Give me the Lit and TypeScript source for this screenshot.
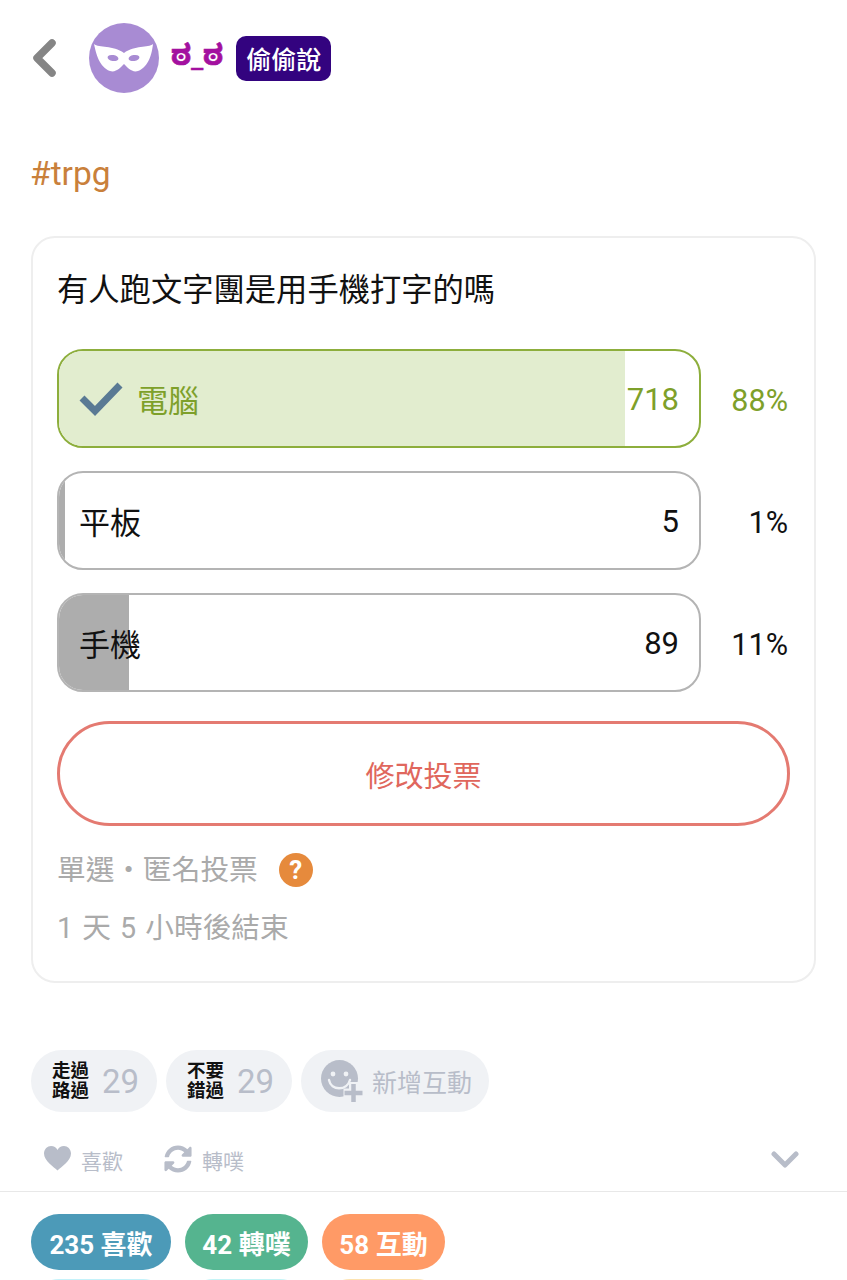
import { LitElement, css, html, svg } from 'lit';
import { customElement } from 'lit/decorators.js';

const options = [
  { label: '電腦', count: 718, percent: 88, fill: 88.4, mine: true },
  { label: '平板', count: 5, percent: 1, fill: 1, mine: false },
  { label: '手機', count: 89, percent: 11, fill: 11, mine: false }
];

const pills = [
  [
    { text: '235 喜歡', width: 140, color: '#4c9ab8' },
    { text: '42 轉噗', width: 123, color: '#55b48f' },
    { text: '58 互動', width: 123, color: '#ff9a66' }
  ],
  [
    { text: '', width: 140, color: '#c4f2fa' },
    { text: '', width: 123, color: '#c4f4f6' },
    { text: '', width: 123, color: '#fde3b0' }
  ]
];

const sync = svg`<path d="M370.72 133.28C339.458 104.008 298.888 87.962 255.848 88c-77.458.068-144.328 53.178-162.791 126.85-1.344 5.363-6.122 9.15-11.651 9.15H24.103c-7.498 0-13.194-6.807-11.807-14.176C33.933 94.924 134.813 8 256 8c66.448 0 126.791 26.136 171.315 68.685L463.03 40.97C478.149 25.851 504 36.559 504 57.941V192c0 13.255-10.745 24-24 24H345.941c-21.382 0-32.09-25.851-16.971-40.971l41.75-41.749zM32 296h134.059c21.382 0 32.09 25.851 16.971 40.971l-41.75 41.75c31.262 29.273 71.835 45.319 114.876 45.28 77.418-.07 144.315-53.144 162.787-126.849 1.344-5.363 6.122-9.15 11.651-9.15h57.304c7.498 0 13.194 6.807 11.807 14.176C478.067 417.076 377.187 504 256 504c-66.448 0-126.791-26.136-171.315-68.685L48.97 471.03C33.851 486.149 8 475.441 8 454.059V320c0-13.255 10.745-24 24-24z"/>`;

@customElement('app-root')
export class AppRoot extends LitElement {
  static styles = css`
    :host {
      display: block;
      height: 1280px;
      overflow: hidden;
      background: #fff;
      font-family: Roboto, "Noto Sans CJK TC", sans-serif;
      color: #111;
    }

    .header {
      display: flex;
      align-items: center;
      height: 70px;
      padding: 23px 0 0 32px;
    }
    .back { width: 24px; height: 40px; margin-right: 33px; }
    .avatar { width: 70px; height: 70px; flex: none; }
    .name {
      margin-left: 12px;
      padding-top: 9px;
      font-size: 28.8px;
      font-weight: 700;
      color: #a3109f;
      line-height: 1;
      -webkit-text-stroke: 0.6px #a3109f;
      font-family: "Noto Sans Kannada", "DejaVu Sans", Roboto, sans-serif;
    }
    .badge {
      margin-left: 13px;
      width: 95px;
      height: 45px;
      display: flex;
      align-items: center;
      justify-content: center;
      border-radius: 10px;
      background: #33037f;
      color: #fff;
      font-size: 25px;
      font-weight: 500;
    }

    .tag {
      margin: 56px 0 0 30px;
      height: 50px;
      line-height: 50px;
      font-size: 33.5px;
      color: #c9803b;
    }

    .card {
      margin: 37px 31px 0 31px;
      height: 747px;
      box-sizing: border-box;
      border: 2px solid #eeeeee;
      border-radius: 24px;
      padding: 31px 25px 0 24px;
    }
    .question {
      font-size: 31.3px;
      line-height: 44px;
      height: 44px;
      margin-bottom: 36px;
    }
    .options { display: flex; flex-direction: column; gap: 23px; }
    .row { display: flex; align-items: center; }
    .option {
      position: relative;
      width: 644px;
      height: 99px;
      box-sizing: border-box;
      border: 2px solid #b4b4b4;
      border-radius: 26px;
      overflow: hidden;
      display: flex;
      align-items: center;
      justify-content: space-between;
      padding: 0 20px 0 20px;
      font-size: 31px;
    }
    .fill {
      position: absolute;
      left: 0;
      top: 0;
      bottom: 0;
      background: #adadad;
    }
    .option.mine { border-color: #8dae3c; color: #7ea02a; }
    .option.mine .fill { background: #e2edcf; }
    .label, .count { position: relative; display: flex; align-items: center; }
    .count { padding-top: 2px; }
    .check { width: 44px; height: 36px; margin-right: 14px; }
    .percent {
      flex: 1;
      text-align: right;
      font-size: 30.5px;
      padding-top: 3px;
      padding-right: 1px;
    }
    .percent.mine { color: #7ea02a; }

    .change {
      margin-top: 29px;
      width: 733px;
      height: 105px;
      box-sizing: border-box;
      border: 3px solid #e47a71;
      border-radius: 53px;
      display: flex;
      align-items: center;
      justify-content: center;
      color: #e0675d;
      font-size: 29px;
    }

    .meta {
      color: #aaaaaa;
      font-size: 28.7px;
      line-height: 58px;
    }
    .remain { word-spacing: 2px; }
    .type { display: flex; align-items: center; margin-top: 15px; }
    .help {
      width: 34px;
      height: 34px;
      margin-left: 21px;
      border-radius: 50%;
      background: #e68a3c;
      color: #fff;
      font-size: 26px;
      font-weight: 700;
      line-height: 34px;
      text-align: center;
    }

    .chips { display: flex; gap: 9px; margin: 67px 0 0 31px; }
    .chip {
      height: 62px;
      border-radius: 31px;
      background: #f0f2f5;
      display: flex;
      align-items: center;
      color: #b8bdc9;
    }
    .chip.react { width: 126px; box-sizing: border-box; padding-left: 21px; }
    .emo {
      width: 38px;
      font-size: 18.5px;
      line-height: 20px;
      font-weight: 700;
      color: #111;
      margin-right: 12px;
    }
    .num { font-size: 33px; font-weight: 400; }
    .chip.add { width: 188px; box-sizing: border-box; padding-left: 20px; font-size: 25px; }
    .smile { width: 42px; height: 42px; margin-right: 9px; }

    .actions {
      display: flex;
      align-items: center;
      height: 48px;
      margin-top: 24px;
      padding: 0 48px 0 44px;
      color: #b8bdc9;
      font-size: 21px;
    }
    .action { display: flex; align-items: center; margin-right: 41px; }
    .action svg { width: 27px; height: 25px; margin-right: 10px; margin-bottom: 3px; fill: #b8bdc9; }
    .action .repeat { width: 28px; height: 28px; }
    .more { margin-left: auto; width: 28px; height: 18px; }

    .counts {
      margin-top: 7px;
      border-top: 1px solid #e8e8e8;
      padding: 22px 0 0 31px;
      display: flex;
      flex-direction: column;
      gap: 9px;
    }
    .pills { display: flex; gap: 14px; }
    .pill {
      height: 56px;
      border-radius: 28px;
      display: flex;
      align-items: center;
      justify-content: center;
      color: #fff;
      font-size: 26px;
      font-weight: 700;
    }
  `;

  render() {
    return html`
      <div class="header">
        <svg class="back" viewBox="0 0 24 40">
          <polyline points="20,5 5,20 20,35" fill="none" stroke="#858585" stroke-width="7.5" stroke-linecap="round" stroke-linejoin="round"/>
        </svg>
        <svg class="avatar" viewBox="0 0 70 70">
          <circle cx="35" cy="35" r="35" fill="#a88bd3"/>
          <path d="M5 21C10 25 24 22 35 30C46 22 59 25 64 21C63 30 60 44 49 48C43 50 38 44 35 41C32 44 27 50 21 48C10 44 7 30 5 21Z" fill="#fff"/>
          <ellipse cx="24" cy="35" rx="5.5" ry="3" transform="rotate(10 24 35)" fill="#a88bd3"/>
          <ellipse cx="45" cy="35" rx="5.5" ry="3" transform="rotate(-10 45 35)" fill="#a88bd3"/>
        </svg>
        <div class="name">ಠ_ಠ</div>
        <div class="badge">偷偷說</div>
      </div>

      <div class="tag">#trpg</div>

      <div class="card">
        <div class="question">有人跑文字團是用手機打字的嗎</div>
        <div class="options">
          ${options.map((o) => html`
            <div class="row">
              <div class="option ${o.mine ? 'mine' : ''}">
                <div class="fill" style="width: ${o.fill}%"></div>
                <div class="label">
                  ${o.mine ? html`
                    <svg class="check" viewBox="0 0 44 36">
                      <polyline points="3,17 16,30 41,4" fill="none" stroke="#5a7a94" stroke-width="7"/>
                    </svg>` : ''}
                  ${o.label}
                </div>
                <div class="count">${o.count}</div>
              </div>
              <div class="percent ${o.mine ? 'mine' : ''}">${o.percent}%</div>
            </div>
          `)}
        </div>
        <div class="change">修改投票</div>
        <div class="meta type">單選・匿名投票<div class="help">?</div></div>
        <div class="meta remain">1 天 5 小時後結束</div>
      </div>

      <div class="chips">
        <div class="chip react"><div class="emo">走過路過</div><div class="num">29</div></div>
        <div class="chip react"><div class="emo">不要錯過</div><div class="num">29</div></div>
        <div class="chip add">
          <svg class="smile" viewBox="0 0 42 42">
            <circle cx="18.5" cy="18.5" r="18.5" fill="#b8bdc9"/>
            <circle cx="12" cy="14" r="2.4" fill="#f0f2f5"/>
            <circle cx="25" cy="14" r="2.4" fill="#f0f2f5"/>
            <path d="M8 20C10 31 26 31 29 20" fill="none" stroke="#f0f2f5" stroke-width="2.4" stroke-linecap="round"/>
            <path d="M32.5 22V42M22.5 33H42" stroke="#f0f2f5" stroke-width="9"/>
            <path d="M32.5 24V42M23.5 33H41.5" stroke="#b8bdc9" stroke-width="4.5"/>
          </svg>
          新增互動
        </div>
      </div>

      <div class="actions">
        <div class="action">
          <svg viewBox="0 0 27 25"><path d="M13.5 24.5C10 21 0 15 0 7.5C0 3 3.5 0 7 0C10 0 12.2 1.6 13.5 4C14.8 1.6 17 0 20 0C23.5 0 27 3 27 7.5C27 15 17 21 13.5 24.5Z"/></svg>
          <span>喜歡</span>
        </div>
        <div class="action">
          <svg class="repeat" viewBox="0 0 512 512">${sync}</svg>
          <span>轉噗</span>
        </div>
        <svg class="more" viewBox="0 0 28 18">
          <polyline points="3,3 14,14 25,3" fill="none" stroke="#b8bdc9" stroke-width="5" stroke-linecap="round" stroke-linejoin="round"/>
        </svg>
      </div>

      <div class="counts">
        ${pills.map((row) => html`
          <div class="pills">
            ${row.map((p) => html`<div class="pill" style="width: ${p.width}px; background: ${p.color}">${p.text}</div>`)}
          </div>
        `)}
      </div>
    `;
  }
}
